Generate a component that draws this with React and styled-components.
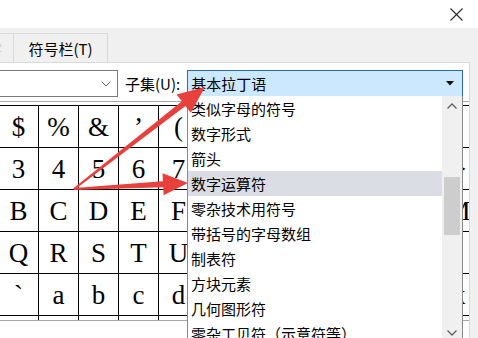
import React from "react";
import styled, { createGlobalStyle } from "styled-components";

const Global = createGlobalStyle`
  html, body { margin: 0; padding: 0; background: #f0f0f0; }
  body { width: 478px; height: 338px; overflow: hidden; }
  * { box-sizing: border-box; }
`;

const UI_FONT = `"Noto Sans CJK SC", "Microsoft YaHei", "Noto Sans", sans-serif`;

const Window = styled.div`
  position: relative;
  width: 478px;
  height: 338px;
  overflow: hidden;
  background: #f0f0f0;
  display: flex;
  flex-direction: column;
  font-family: ${UI_FONT};
  font-size: 15px;
  color: #000;
`;

const TitleBar = styled.div`
  height: 28px;
  flex: none;
  background: #fff;
  display: flex;
  align-items: center;
  justify-content: flex-end;
  padding-right: 15px;
`;

const TabStrip = styled.div`
  height: 34px;
  flex: none;
  display: flex;
  align-items: flex-end;
`;

const Tab = styled.div`
  height: 29px;
  width: ${(p) => p.$w}px;
  margin-left: ${(p) => p.$ml || 0}px;
  border: 1px solid #d9d9d9;
  border-bottom: none;
  background: #f0f0f0;
  display: flex;
  align-items: center;
  justify-content: ${(p) => (p.$partial ? "flex-end" : "center")};
  color: ${(p) => (p.$partial ? "#c8c8c8" : "#000")};
  line-height: 1;
  overflow: hidden;
  white-space: nowrap;
`;

const Panel = styled.div`
  position: relative;
  flex: 1;
  margin-right: 8px;
  background: #fff;
  border-top: 1px solid #d9d9d9;
  border-right: 1px solid #d9d9d9;
  display: flex;
  flex-direction: column;
`;

const ControlsRow = styled.div`
  display: flex;
  align-items: center;
  height: 27px;
  margin-top: 7px;
  margin-left: -2px;
  flex: none;
`;

const FontCombo = styled.div`
  width: 120px;
  height: 27px;
  border: 1px solid #7a7a7a;
  background: #fff;
  display: flex;
  align-items: center;
  justify-content: flex-end;
  padding-right: 6px;
`;

const Label = styled.span`
  margin-left: 7px;
  line-height: 1;
  white-space: nowrap;
`;

const SubsetCombo = styled.div`
  margin-left: 7px;
  width: 276px;
  height: 27px;
  border: 1px solid #2f6aa8;
  background: #cce8ff;
  display: flex;
  align-items: center;
  justify-content: space-between;
  padding: 0 8px 0 3px;
  line-height: 1;
`;

const GridViewport = styled.div`
  margin-top: 4px;
  height: 220px;
  flex: none;
  border-top: 1px solid #a8a8a8;
  border-bottom: 1px solid #a8a8a8;
  overflow: hidden;
`;

const CharGrid = styled.div`
  margin-top: 3px;
  margin-left: -2px;
  display: grid;
  grid-template-columns: repeat(12, 40px);
  grid-auto-rows: 42px;
  border-top: 1px solid #000;
  border-left: 1px solid #000;
`;

const Cell = styled.div`
  border-right: 1px solid #000;
  border-bottom: 1px solid #000;
  display: flex;
  align-items: center;
  justify-content: center;
  font-family: "Liberation Serif", "DejaVu Serif", serif;
  font-size: 27px;
  line-height: 1;
  padding-top: 1px;
`;

const DropList = styled.div`
  position: absolute;
  left: 187px;
  top: 33px;
  width: 276px;
  height: 247px;
  background: #fff;
  border-left: 1px solid #8a8a8a;
  border-right: 1px solid #8a8a8a;
  display: flex;
  overflow: hidden;
`;

const Items = styled.div`
  flex: 1;
  display: flex;
  flex-direction: column;
`;

const Item = styled.div`
  height: 25px;
  flex: none;
  line-height: 25px;
  padding-left: 3px;
  white-space: nowrap;
  background: ${(p) => (p.$active ? "#dadde3" : "transparent")};
`;

const ScrollBar = styled.div`
  width: 20px;
  flex: none;
  background: #f0f0f0;
  display: flex;
  flex-direction: column;
  align-items: center;
`;

const ScrollBtn = styled.div`
  height: 20px;
  width: 100%;
  flex: none;
  display: flex;
  align-items: center;
  justify-content: center;
`;

const Track = styled.div`
  flex: 1;
  width: 100%;
  padding: 0 2px;
`;

const Thumb = styled.div`
  margin-top: 61px;
  height: 58px;
  background: #cdcdcd;
`;

const Overlay = styled.svg`
  position: absolute;
  left: 0;
  top: 0;
  pointer-events: none;
`;

function arrowPoints(x0, y0, x1, y1, tailW, shaftW, headLen, headW) {
  const dx = x1 - x0;
  const dy = y1 - y0;
  const len = Math.hypot(dx, dy);
  const ux = dx / len;
  const uy = dy / len;
  const px = -uy;
  const py = ux;
  const bx = x1 - ux * headLen;
  const by = y1 - uy * headLen;
  const pts = [
    [x0 + px * tailW / 2, y0 + py * tailW / 2],
    [bx + px * shaftW / 2, by + py * shaftW / 2],
    [bx + px * headW / 2, by + py * headW / 2],
    [x1, y1],
    [bx - px * headW / 2, by - py * headW / 2],
    [bx - px * shaftW / 2, by - py * shaftW / 2],
    [x0 - px * tailW / 2, y0 - py * tailW / 2],
  ];
  return pts.map((p) => p.map((v) => v.toFixed(1)).join(",")).join(" ");
}

const rows = [
  ["$", "%", "&", "\u2019", "(", ")", "*", "+", ",", "-", ".", "/"],
  ["3", "4", "5", "6", "7", "8", "9", ":", ";", "<", "=", ">"],
  ["B", "C", "D", "E", "F", "G", "H", "I", "J", "K", "L", "M"],
  ["Q", "R", "S", "T", "U", "V", "W", "X", "Y", "Z", "[", "\\"],
  ["`", "a", "b", "c", "d", "e", "f", "g", "h", "i", "j", "k"],
  ["p", "q", "r", "s", "t", "u", "v", "w", "x", "y", "z", "{"],
];

const subsets = [
  "类似字母的符号",
  "数字形式",
  "箭头",
  "数字运算符",
  "零杂技术用符号",
  "带括号的字母数组",
  "制表符",
  "方块元素",
  "几何图形符",
  "零杂工贝符（示意符等）",
];

export default function App() {
  return (
    <>
      <Global />
      <Window>
        <TitleBar>
          <svg width="13" height="13" viewBox="0 0 13 13">
            <path d="M0.5 0.5 L12.5 12.5 M12.5 0.5 L0.5 12.5" stroke="#2b2b2b" strokeWidth="1.1" fill="none" />
          </svg>
        </TitleBar>
        <TabStrip>
          <Tab $partial $w={15} $ml={-1}>
            <span style={{ marginRight: 11 }}>字</span>
          </Tab>
          <Tab $w={95} $ml={-1}>符号栏(T)</Tab>
        </TabStrip>
        <Panel>
          <ControlsRow>
            <FontCombo>
              <svg width="10" height="6" viewBox="0 0 10 6">
                <path d="M0.5 0.5 L5 5 L9.5 0.5" stroke="#606060" strokeWidth="1" fill="none" />
              </svg>
            </FontCombo>
            <Label>子集(U):</Label>
            <SubsetCombo>
              <span>基本拉丁语</span>
              <svg width="8" height="5" viewBox="0 0 8 5">
                <path d="M0 0 L8 0 L4 4.5 Z" fill="#111" />
              </svg>
            </SubsetCombo>
          </ControlsRow>
          <GridViewport>
            <CharGrid>
              {rows.flat().map((c, i) => (
                <Cell key={i}>{c}</Cell>
              ))}
            </CharGrid>
          </GridViewport>
          <DropList>
            <Items>
              {subsets.map((s, i) => (
                <Item key={s} $active={i === 3}>{s}</Item>
              ))}
            </Items>
            <ScrollBar>
              <ScrollBtn>
                <svg width="10" height="6" viewBox="0 0 10 6">
                  <path d="M0.5 5.5 L5 1 L9.5 5.5" stroke="#606060" strokeWidth="1.3" fill="none" />
                </svg>
              </ScrollBtn>
              <Track>
                <Thumb />
              </Track>
              <ScrollBtn>
                <svg width="10" height="6" viewBox="0 0 10 6">
                  <path d="M0.5 0.5 L5 5 L9.5 0.5" stroke="#606060" strokeWidth="1.3" fill="none" />
                </svg>
              </ScrollBtn>
            </ScrollBar>
          </DropList>
        </Panel>
        <Overlay width="478" height="338" viewBox="0 0 478 338">
          <polygon points={arrowPoints(74, 189, 205, 87, 2, 6, 27, 23)} fill="#e8403c" />
          <polygon points={arrowPoints(74, 189, 188, 183, 2, 6, 25, 22)} fill="#e8403c" />
        </Overlay>
      </Window>
    </>
  );
}
